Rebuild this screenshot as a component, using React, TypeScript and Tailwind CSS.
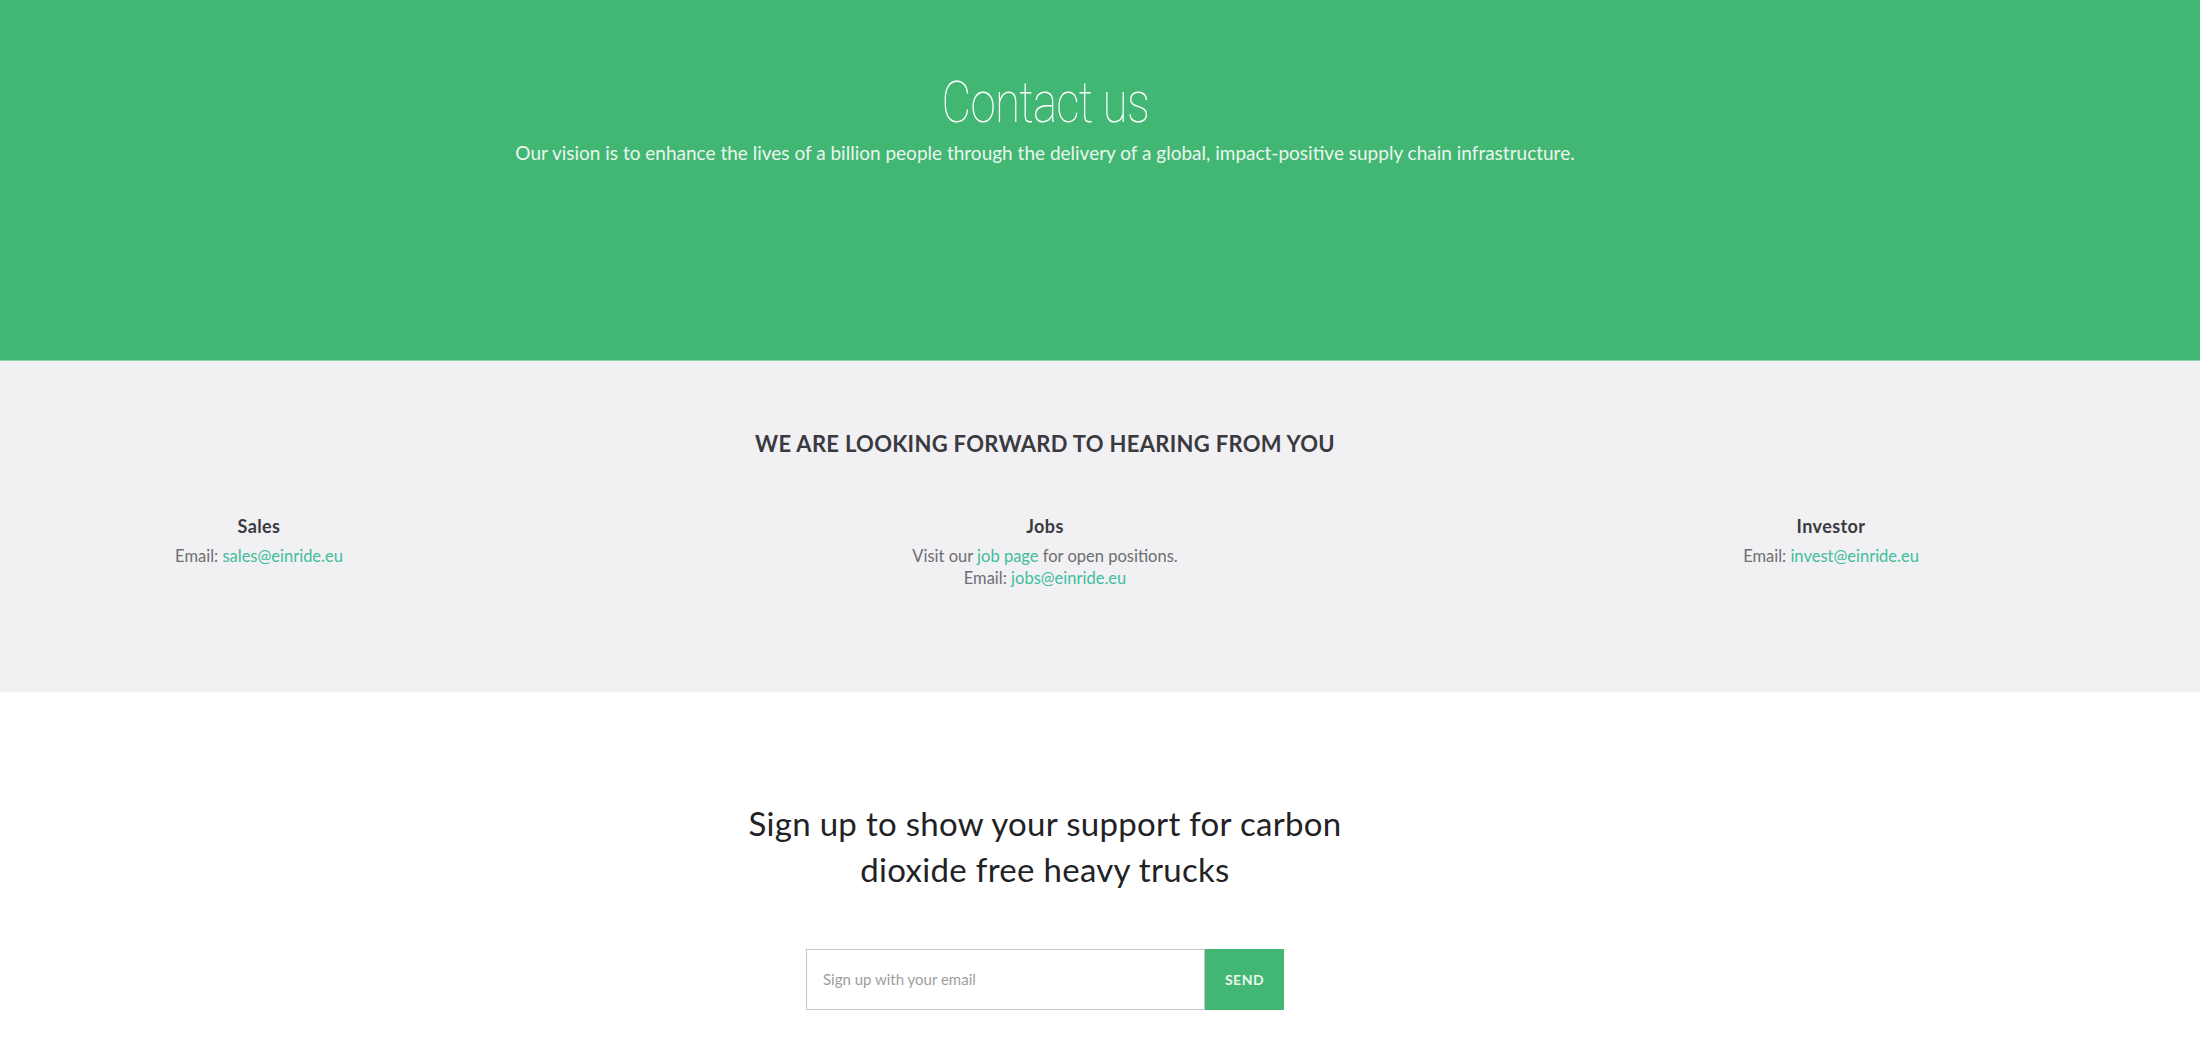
import React from "react";

const body = { fontFamily: "Lato, 'Open Sans', sans-serif" };

export default function App() {
  return (
    <div className="w-[2200px] min-h-[1064px] bg-white" style={body}>
      {/* Green hero */}
      <section className="h-[361px] bg-[#42b773] border-b border-[#8fd3a8]">
        <div className="w-[2090px] flex flex-col items-center pt-[70px]">
          <h1
            className="text-white text-[58px] leading-[64px] font-thin tracking-[-1px] scale-x-[0.79]"
            style={{ fontFamily: "Roboto, sans-serif" }}
          >
            Contact us
          </h1>
          <p className="mt-[7px] text-[19px] leading-[24px] text-[#eaf6ee]">
            Our vision is to enhance the lives of a billion people through the delivery of a global, impact-positive supply chain infrastructure.
          </p>
        </div>
      </section>

      {/* Gray contact section */}
      <section className="h-[331px] bg-[#f1f0f3]">
        <div className="w-[2090px] flex flex-col items-center pt-[69px]">
          <h2 className="text-[22px] leading-[28px] font-bold text-[#3a3a3f] tracking-[0.3px]">
            WE ARE LOOKING FORWARD TO HEARING FROM YOU
          </h2>
          <div className="mt-[57px] w-[1972px] flex justify-between">
            <div className="w-[400px] flex flex-col items-center">
              <h3 className="text-[18px] leading-[22px] font-bold text-[#3a3a3f] tracking-[0.4px]">Sales</h3>
              <p className="mt-[8px] text-[16.5px] leading-[22px] text-[#6e6e72]">
                Email: <a className="text-[#3fbe9c]">sales@einride.eu</a>
              </p>
            </div>
            <div className="w-[400px] flex flex-col items-center">
              <h3 className="text-[18px] leading-[22px] font-bold text-[#3a3a3f] tracking-[0.4px]">Jobs</h3>
              <p className="mt-[8px] text-[16.5px] leading-[22px] text-[#6e6e72] text-center">
                Visit our <a className="text-[#3fbe9c]">job page</a> for open positions.
                <br />
                Email: <a className="text-[#3fbe9c]">jobs@einride.eu</a>
              </p>
            </div>
            <div className="w-[400px] flex flex-col items-center">
              <h3 className="text-[18px] leading-[22px] font-bold text-[#3a3a3f] tracking-[0.4px]">Investor</h3>
              <p className="mt-[8px] text-[16.5px] leading-[22px] text-[#6e6e72]">
                Email: <a className="text-[#3fbe9c]">invest@einride.eu</a>
              </p>
            </div>
          </div>
        </div>
      </section>

      {/* Sign up */}
      <section className="bg-white">
        <div className="w-[2090px] flex flex-col items-center pt-[108px]">
          <h2 className="w-[620px] text-center text-[33px] leading-[46px] text-[#222226] tracking-[0.3px]">
            Sign up to show your support for carbon dioxide free heavy trucks
          </h2>
          <div className="mt-[57px] flex h-[61px]">
            <div className="w-[399px] h-full border border-[#c6c6c6] flex items-center pl-[16px]">
              <span className="text-[15px] text-[#9e9e9e]">Sign up with your email</span>
            </div>
            <button className="w-[79px] h-full bg-[#42b773] text-[#eaf6ee] text-[14px] font-bold tracking-[0.5px]">
              SEND
            </button>
          </div>
        </div>
      </section>
    </div>
  );
}
